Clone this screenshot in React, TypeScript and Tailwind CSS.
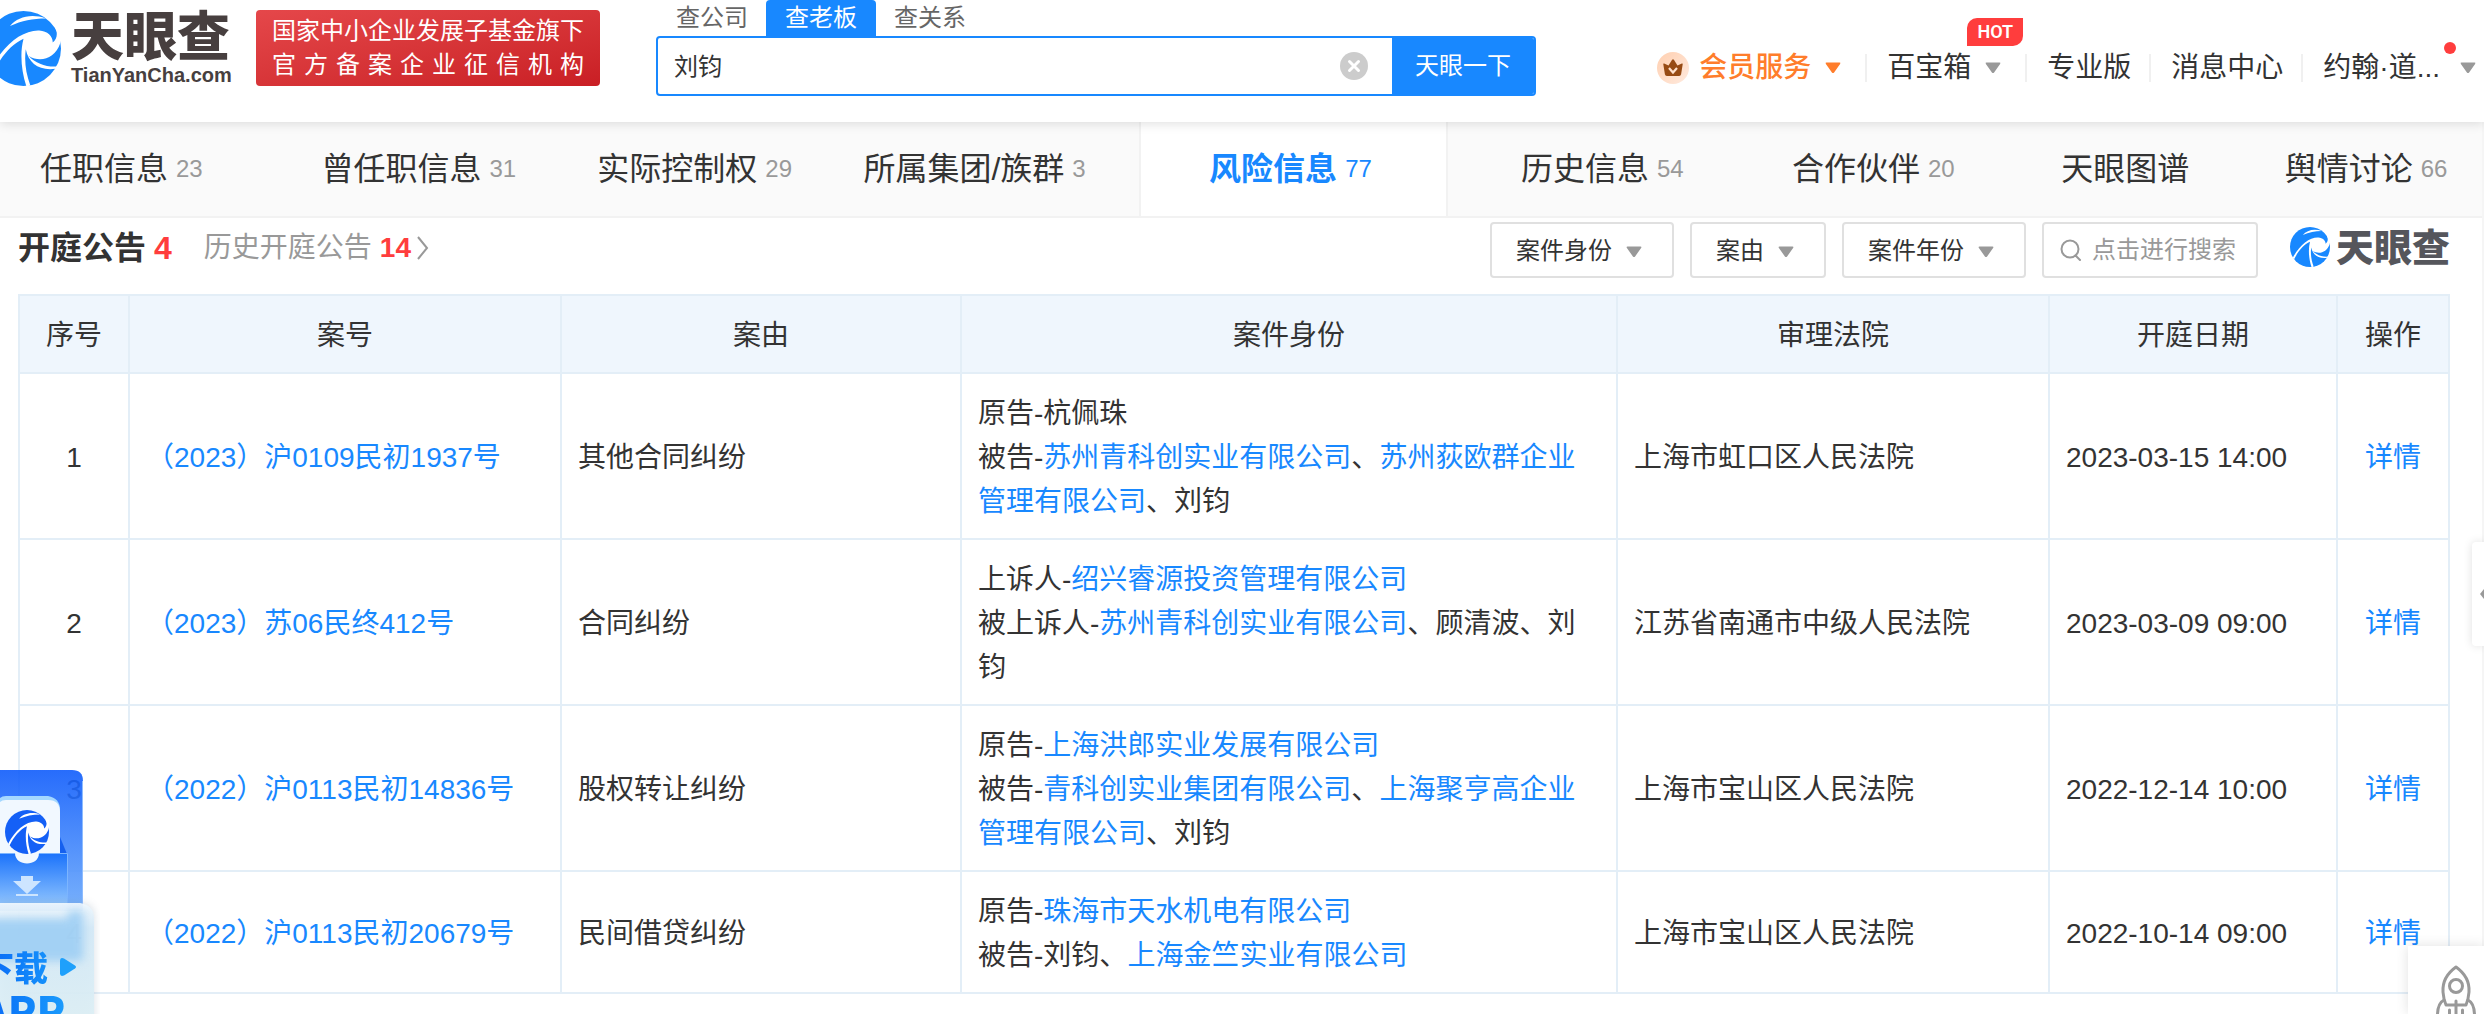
import { Fragment, ReactNode } from "react"

type Party = { role: string; names: { text: string; link?: boolean }[] }

const tabs = [
  { label: "任职信息", count: 23, cell: "pl-10" },
  { label: "曾任职信息", count: 31, cell: "justify-center" },
  { label: "实际控制权", count: 29, cell: "justify-center" },
  { label: "所属集团/族群", count: 3, cell: "justify-center" },
  { label: "风险信息", count: 77, cell: "justify-center", active: true },
  { label: "历史信息", count: 54, cell: "justify-center" },
  { label: "合作伙伴", count: 20, cell: "justify-center" },
  { label: "天眼图谱", cell: "justify-center" },
  { label: "舆情讨论", count: 66, cell: "justify-center" },
]

const columns = [
  { title: "序号", width: "w-[110px]" },
  { title: "案号", width: "w-[432px]" },
  { title: "案由", width: "w-[400px]" },
  { title: "案件身份", width: "w-[656px]" },
  { title: "审理法院", width: "w-[432px]" },
  { title: "开庭日期", width: "w-[288px]" },
  { title: "操作", width: "w-[112px]" },
]

const rows: { no: string; cause: string; parties: Party[]; court: string; date: string }[] = [
  {
    no: "（2023）沪0109民初1937号",
    cause: "其他合同纠纷",
    parties: [
      { role: "原告", names: [{ text: "杭佩珠" }] },
      {
        role: "被告",
        names: [
          { text: "苏州青科创实业有限公司", link: true },
          { text: "苏州荻欧群企业管理有限公司", link: true },
          { text: "刘钧" },
        ],
      },
    ],
    court: "上海市虹口区人民法院",
    date: "2023-03-15 14:00",
  },
  {
    no: "（2023）苏06民终412号",
    cause: "合同纠纷",
    parties: [
      { role: "上诉人", names: [{ text: "绍兴睿源投资管理有限公司", link: true }] },
      {
        role: "被上诉人",
        names: [{ text: "苏州青科创实业有限公司", link: true }, { text: "顾清波" }, { text: "刘钧" }],
      },
    ],
    court: "江苏省南通市中级人民法院",
    date: "2023-03-09 09:00",
  },
  {
    no: "（2022）沪0113民初14836号",
    cause: "股权转让纠纷",
    parties: [
      { role: "原告", names: [{ text: "上海洪郎实业发展有限公司", link: true }] },
      {
        role: "被告",
        names: [
          { text: "青科创实业集团有限公司", link: true },
          { text: "上海聚亨高企业管理有限公司", link: true },
          { text: "刘钧" },
        ],
      },
    ],
    court: "上海市宝山区人民法院",
    date: "2022-12-14 10:00",
  },
  {
    no: "（2022）沪0113民初20679号",
    cause: "民间借贷纠纷",
    parties: [
      { role: "原告", names: [{ text: "珠海市天水机电有限公司", link: true }] },
      { role: "被告", names: [{ text: "刘钧" }, { text: "上海金竺实业有限公司", link: true }] },
    ],
    court: "上海市宝山区人民法院",
    date: "2022-10-14 09:00",
  },
]

function Emblem({ className }: { className: string }) {
  return (
    <svg viewBox="0 0 100 100" className={className} aria-hidden="true">
      <circle cx="50" cy="50" r="50" fill="currentColor" />
      <path
        fill="#fff"
        d="M89 42C89 33 82 27 71 26C49 25 23 45 7 77L10 81C20 61 34 44 50 37C45 56 47 80 54 101L59 99C53 82 51 68 53 51C57 70 71 80 93 77L95 74C80 75 66 70 57 60C72 69 92 64 99 43L104 22L92 22C96 29 95 37 89 42Z"
      />
      <path fill="#fff" d="M32 20C42 8 60 3 80 10C62 10 48 13 32 20Z" />
    </svg>
  )
}

function Caret({ className }: { className: string }) {
  return (
    <svg viewBox="0 0 16 12" className={`h-3 w-4 shrink-0 ${className}`} aria-hidden="true">
      <path d="M1.5 0.5h13q1.5 0 .6 1.4l-6 8.6q-1.1 1.2-2.2 0l-6-8.600q-.9-1.400.6-1.400z" fill="currentColor" />
    </svg>
  )
}

function Divider() {
  return <span className="h-7 w-0.5 shrink-0 bg-[#f0f0f0]" />
}

function FilterSelect({ label, width }: { label: string; width: string }) {
  return (
    <div className={`relative ${width}`}>
      <select
        aria-label={label}
        className="h-14 w-full appearance-none rounded border-2 border-[#e0e0e0] bg-white pl-6 pt-0.5 text-2xl text-[#333]"
      >
        <option>{label}</option>
      </select>
      <Caret className="pointer-events-none absolute right-8 top-6 text-[#999]" />
    </div>
  )
}

function Link({ children }: { children: ReactNode }) {
  return (
    <a href="#" className="text-[#1888ff]">
      {children}
    </a>
  )
}

function Cell({ className = "", children }: { className?: string; children: ReactNode }) {
  return <td className={`border-2 border-[#e3eef7] px-4 pb-[14px] pt-[18px] ${className}`}>{children}</td>
}

function Header() {
  return (
    <header className="relative z-10 flex h-[122px] items-start bg-white shadow-[0_2px_10px_rgba(0,0,0,0.12)]">
      <a href="#" className="-ml-3.5 flex shrink-0 pt-[11px]">
        <Emblem className="size-[75px] text-[#1888ff]" />
        <span className="ml-2.5 flex w-40 flex-col pt-0.5 text-[#473f3f]">
          <span className="text-[53px] font-black leading-[50px]">天眼查</span>
          <span className="text-xl font-bold leading-6">TianYanCha.com</span>
        </span>
      </a>
      <div className="ml-[25px] mt-2.5 flex h-[76px] w-[344px] shrink-0 flex-col justify-center rounded bg-gradient-to-br from-[#e5474a] to-[#c91e24] px-4 text-2xl leading-[34px] text-white">
        <div className="whitespace-nowrap">国家中小企业发展子基金旗下</div>
        <div className="flex justify-between">
          {"官方备案企业征信机构".split("").map((char) => (
            <span key={char}>{char}</span>
          ))}
        </div>
      </div>

      <form className="ml-14 w-[880px] shrink-0">
        <div className="flex h-9 pl-0.5 text-2xl leading-[34px] text-[#666]">
          <button type="button" className="w-[108px]">查公司</button>
          <button type="button" className="w-[110px] rounded-t bg-[#1888ff] text-white">查老板</button>
          <button type="button" className="w-[108px]">查关系</button>
        </div>
        <div className="flex h-[60px] overflow-hidden rounded border-2 border-[#1888ff] bg-white">
          <input aria-label="搜索" defaultValue="刘钧" className="min-w-0 flex-1 pl-4 pt-0.5 text-2xl text-[#333] outline-none" />
          <button type="button" aria-label="清除" className="mr-6">
            <svg viewBox="0 0 28 28" className="size-7">
              <circle cx="14" cy="14" r="14" fill="#ccc" />
              <path d="M9.500 9.500l9 9M18.500 9.500l-9 9" stroke="#fff" strokeWidth="3" strokeLinecap="round" />
            </svg>
          </button>
          <button type="submit" className="w-[142px] bg-[#1888ff] text-2xl text-white">天眼一下</button>
        </div>
      </form>

      <nav className="ml-auto flex shrink-0 items-center whitespace-nowrap pr-2 pt-12 text-[28px] leading-10 text-[#333]">
        <svg viewBox="0 0 32 32" className="mr-2.5 size-8" aria-hidden="true">
          <defs>
            <linearGradient id="coin" x1="0" y1="0" x2="1" y2="1">
              <stop offset="0" stopColor="#ffcfb0" />
              <stop offset="1" stopColor="#ffeade" />
            </linearGradient>
          </defs>
          <circle cx="16" cy="16" r="16" fill="url(#coin)" />
          <path
            d="M6.300 12.300q-.2-1.200.9-.7l4.300 1.900 3.600-5.700q.9-1.200 1.800 0l3.600 5.700 4.300-1.900q1.100-.5.9.7l-1.600 10q-.3 1.700-2 1.700H9.900q-1.700 0-2-1.700z"
            fill="#974b14"
          />
          <path d="M12 16l4 4.500 4-4.500" fill="none" stroke="#ffe0cb" strokeWidth="2.200" />
        </svg>
        <a href="#" className="mr-3.5 font-medium text-[#ff7d2b]">会员服务</a>
        <Caret className="mr-6 text-[#ff7d2b]" />
        <Divider />
        <a href="#" className="relative ml-5 mr-3.5">
          百宝箱
          <span className="absolute -top-[30px] left-20 flex h-7 w-14 items-center justify-center rounded-br-[10px] rounded-tl-[10px] bg-[#ff3d3d] font-[Roboto] text-lg font-semibold text-white">
            HOT
          </span>
        </a>
        <Caret className="mr-6 text-[#999]" />
        <Divider />
        <a href="#" className="ml-5 mr-[18px]">专业版</a>
        <Divider />
        <a href="#" className="ml-5 mr-[18px]">消息中心</a>
        <Divider />
        <a href="#" className="relative ml-5 mr-5">
          约翰·道...
          <span className="absolute -right-4 -top-1.5 size-3 rounded-full bg-[#ff3d3d]" />
        </a>
        <Caret className="text-[#999]" />
      </nav>
    </header>
  )
}

function SectionTabs() {
  return (
    <nav className="grid h-24 grid-cols-[265fr_314fr_238fr_322fr_310fr_314fr_228fr_276fr_206fr] border-b-2 border-[#f2f2f2] bg-[#fafafa] pr-2.5">
      {tabs.map((tab) => (
        <a
          key={tab.label}
          href="#"
          className={`flex items-center gap-2 whitespace-nowrap pr-1.5 text-[32px] ${tab.cell} ${
            tab.active ? "border-x-2 border-[#f2f2f2] bg-white font-bold text-[#1888ff]" : "text-[#333]"
          }`}
        >
          {tab.label}
          {tab.count && (
            <span className={`text-2xl font-normal ${tab.active ? "text-[#1888ff]" : "text-[#999]"}`}>{tab.count}</span>
          )}
        </a>
      ))}
    </nav>
  )
}

function Toolbar() {
  return (
    <div className="flex h-[76px] items-start pt-1">
      <h2 className="flex items-center gap-2 text-[32px] font-bold leading-[52px] text-[#333]">
        开庭公告 <span className="text-[#ff3d3d]">4</span>
      </h2>
      <a href="#" className="ml-8 flex items-center gap-2 text-[28px] leading-[52px] text-[#999]">
        历史开庭公告 <span className="font-bold text-[#ff3d3d]">14</span>
        <svg viewBox="0 0 12 24" className="-ml-0.5 h-6 w-3" aria-hidden="true">
          <path d="M1 1l9 11-9 11" fill="none" stroke="#999" strokeWidth="2" />
        </svg>
      </a>
      <div className="ml-auto flex gap-4">
        <FilterSelect label="案件身份" width="w-[184px]" />
        <FilterSelect label="案由" width="w-[136px]" />
        <FilterSelect label="案件年份" width="w-[184px]" />
        <label className="flex h-14 w-[216px] items-center gap-2.5 rounded border-2 border-[#e0e0e0] pl-4">
          <svg viewBox="0 0 22 22" className="size-[22px] shrink-0" aria-hidden="true">
            <circle cx="10" cy="10" r="8.500" fill="none" stroke="#999" strokeWidth="2" />
            <path d="M15.500 16.500l4.500 4.500" stroke="#999" strokeWidth="2" strokeLinecap="round" />
          </svg>
          <input
            aria-label="点击进行搜索"
            placeholder="点击进行搜索"
            className="w-full min-w-0 text-2xl outline-none placeholder:text-[#999]"
          />
        </label>
      </div>
      <div className="ml-8 flex items-center gap-1.5 pt-1">
        <Emblem className="size-10 text-[#1888ff]" />
        <span className="pt-0.5 text-[38px] font-black leading-10 text-[#55565c]">天眼查</span>
      </div>
    </div>
  )
}

function CaseTable() {
  return (
    <table className="w-full table-fixed border-collapse text-[28px] leading-[44px] text-[#333]">
      <thead>
        <tr className="bg-[#eff6fd]">
          {columns.map((column) => (
            <th
              key={column.title}
              className={`border-2 border-[#e3eef7] pb-[14px] pt-[18px] font-normal ${column.width}`}
            >
              {column.title}
            </th>
          ))}
        </tr>
      </thead>
      <tbody>
        {rows.map((row, index) => (
          <tr key={row.no}>
            <Cell className="text-center">{index + 1}</Cell>
            <Cell>
              <Link>{row.no}</Link>
            </Cell>
            <Cell>{row.cause}</Cell>
            <Cell>
              {row.parties.map((party) => (
                <div key={party.role}>
                  {party.role}-
                  {party.names.map((name, i) => (
                    <Fragment key={name.text}>
                      {i > 0 && "、"}
                      {name.link ? <Link>{name.text}</Link> : name.text}
                    </Fragment>
                  ))}
                </div>
              ))}
            </Cell>
            <Cell>{row.court}</Cell>
            <Cell>{row.date}</Cell>
            <Cell className="text-center">
              <Link>详情</Link>
            </Cell>
          </tr>
        ))}
      </tbody>
    </table>
  )
}

function DownloadBadge() {
  return (
    <a href="#" className="absolute bottom-0 left-0 z-20 block h-[244px] w-[100px] overflow-hidden">
      <svg viewBox="0 0 100 244" className="absolute inset-0 h-full w-full" aria-hidden="true">
        <defs>
          <linearGradient id="back" x1="0" y1="0" x2="0" y2="1">
            <stop offset="0" stopColor="#0f5cfb" />
            <stop offset="1" stopColor="#6aa9fb" />
          </linearGradient>
          <linearGradient id="box" x1="0" y1="0" x2="0" y2="1">
            <stop offset="0" stopColor="#1a72fb" />
            <stop offset="1" stopColor="#8fc4fe" />
          </linearGradient>
          <linearGradient id="card" x1="0" y1="0" x2="0" y2="1">
            <stop offset="0" stopColor="#f2f9fe" />
            <stop offset="0.200" stopColor="#d3e9f7" />
            <stop offset="1" stopColor="#def0f5" />
          </linearGradient>
          <filter id="soft" x="-20%" y="-20%" width="140%" height="140%">
            <feGaussianBlur stdDeviation="4" />
          </filter>
        </defs>
        <path d="M0 0h72q11 0 11 11v130H0z" fill="url(#back)" opacity="0.900" />
        <path d="M82.500 11v130" stroke="#8dbcff" />
        <path d="M60 67l7 17h-7z" fill="#1560ee" />
        <path d="M0 28q2-2 6-2h42q12 2 12 14v10H0z" fill="#a5d8ff" />
        <path d="M0 32q2-2 6-2h42q12 0 12 12v41H0z" fill="#f1f8ff" />
        <path d="M0 83h67.500v52H0z" fill="url(#box)" />
        <path d="M0 83.500h67.500V134" fill="none" stroke="#7cb5ff" />
        <path d="M15 83h24c0 14-24 14-24 0z" fill="#f1f8ff" />
        <path d="M21 106h12v5h8l-14 13-14-13h8zM16 124h22v2H16z" fill="#cde5ff" />
        <path d="M0 133h82q12 2 12 14v110H0z" fill="#7c93a8" opacity="0.300" filter="url(#soft)" />
        <path d="M0 133h80q14 2 14 15v110H0z" fill="url(#card)" opacity="0.920" />
        <path d="M-10 149h78v-8h15v46q0 4-5 4H-10z" fill="#9bcdf4" filter="url(#soft)" opacity="0.850" />
        <path d="M60 191q0-4 4-2.500l11 7q2 1.500 0 3l-11 7q-4 1.500-4-2z" fill="#1fa0fb" />
      </svg>
      <Emblem className="absolute left-[5px] top-10 size-11 text-[#1460f6]" />
      <div className="absolute -left-5 top-[176px] bg-gradient-to-r from-[#0f63f5] to-[#1c9bfc] bg-clip-text font-['Noto_Sans_CJK_SC',sans-serif] text-[34px] font-black leading-[42px] text-transparent">
        <div>下载</div>
        <div className="text-[42px]">APP</div>
      </div>
    </a>
  )
}

export default function App() {
  return (
    <div className="relative min-h-screen overflow-hidden bg-white font-['Liberation_Sans','Noto_Sans_CJK_SC',sans-serif]">
      <Header />
      <div className="border-r-2 border-[#f5f5f5]">
        <SectionTabs />
        <main className="min-h-[796px] pl-[18px] pr-8">
          <Toolbar />
          <CaseTable />
        </main>
      </div>

      <DownloadBadge />

      <button
        type="button"
        aria-label="展开"
        className="absolute right-0 top-[542px] flex h-[104px] w-3 items-center justify-end rounded-l bg-white shadow-[0_0_10px_rgba(0,0,0,0.12)]"
      >
        <svg viewBox="0 0 4 10" className="h-2.5 w-1" aria-hidden="true">
          <path d="M4 0v10L0 5z" fill="#999" />
        </svg>
      </button>
      <button
        type="button"
        aria-label="返回顶部"
        className="absolute bottom-0 right-0 h-[68px] w-[76px] overflow-hidden bg-white pl-7 pt-[19px] shadow-[0_0_12px_rgba(0,0,0,0.12)]"
      >
        <svg viewBox="0 0 40 49" className="h-[49px] w-10" fill="none" stroke="#999" strokeWidth="3" strokeLinecap="round" aria-hidden="true">
          <path d="M20 2Q6 12 7 27q.5 7 3 13h20q2.500-6 3-13Q34 12 20 2z" strokeLinejoin="round" />
          <circle cx="20" cy="21" r="6.500" />
          <path d="M8 35Q2 38 1.500 49M32 35q6 3 6.500 14M20 36v14M13.500 45v6M26.500 45v6" />
        </svg>
      </button>
    </div>
  )
}
